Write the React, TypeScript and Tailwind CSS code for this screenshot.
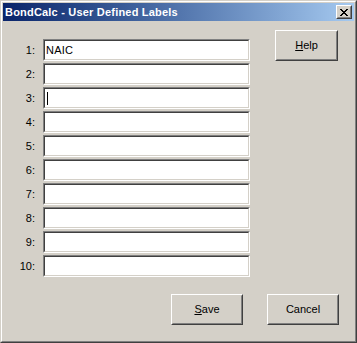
import React from "react";

const labels = ["NAIC", "", "", "", "", "", "", "", "", ""];

function Field({ value, caret }: { value: string; caret?: boolean }) {
  return (
    <div className="h-[22px] w-[207px] border border-t-[#808080] border-l-[#808080] border-b-white border-r-white">
      <div className="h-full w-full border border-t-[#404040] border-l-[#404040] border-b-[#d4d0c8] border-r-[#d4d0c8] bg-white flex items-center pl-[1px]">
        {value && <span className="text-[11px] leading-none text-black tracking-[0.2px]">{value}</span>}
        {caret && <span className="block w-[1px] h-[13px] bg-black ml-[1px]" />}
      </div>
    </div>
  );
}

function Button({ children, w }: { children: React.ReactNode; w: string }) {
  return (
    <div className={`${w} h-[31px] border border-t-white border-l-white border-b-[#404040] border-r-[#404040]`}>
      <div className="h-full w-full border border-t-[#d4d0c8] border-l-[#d4d0c8] border-b-[#808080] border-r-[#808080] flex items-center justify-center text-[11px] text-black">
        {children}
      </div>
    </div>
  );
}

export default function App() {
  return (
    <div
      className="w-[357px] h-[343px] bg-[#d4d0c8] border border-t-[#d4d0c8] border-l-[#d4d0c8] border-b-[#404040] border-r-[#404040] select-none"
      style={{ fontFamily: '"Liberation Sans", Arial, sans-serif' }}
    >
      <div className="h-full w-full border border-t-white border-l-white border-b-[#808080] border-r-[#808080] p-[1px] flex flex-col">
        {/* title bar */}
        <div className="h-[18px] bg-gradient-to-r from-[#0a246a] to-[#a6caf0] flex items-center justify-between pl-[2px] pr-[2px]">
          <span className="text-white font-bold text-[11px] leading-none tracking-[0.2px]">BondCalc - User Defined Labels</span>
          <div className="w-[16px] h-[14px] border border-t-white border-l-white border-b-[#404040] border-r-[#404040] bg-[#d4d0c8]">
            <div className="h-full w-full border border-t-[#d4d0c8] border-l-[#d4d0c8] border-b-[#808080] border-r-[#808080] flex items-center justify-center">
              <svg width="8" height="7" viewBox="0 0 8 7" shapeRendering="crispEdges">
                <path d="M0 0h2v1h-2zM6 0h2v1h-2zM1 1h2v1h-2zM5 1h2v1h-2zM2 2h4v1h-4zM3 3h2v1h-2zM2 4h4v1h-4zM1 5h2v1h-2zM5 5h2v1h-2zM0 6h2v1h-2zM6 6h2v1h-2z" fill="#000" />
              </svg>
            </div>
          </div>
        </div>
        {/* body */}
        <div className="flex">
          <div className="flex flex-col gap-[2px] pt-[18px]">
            {labels.map((v, i) => (
              <div key={i} className="flex items-center">
                <span className="w-[40px] pr-[8px] text-right text-[11px] text-black">{i + 1}:</span>
                <Field value={v} caret={i === 2} />
              </div>
            ))}
          </div>
          <div className="pt-[9px] pl-[25px]">
            <Button w="w-[63px]">
              <span><span className="underline">H</span>elp</span>
            </Button>
          </div>
        </div>
        <div className="flex justify-end gap-[24px] pr-[15px] pt-[17px]">
          <Button w="w-[72px]">
            <span><span className="underline">S</span>ave</span>
          </Button>
          <Button w="w-[72px]">Cancel</Button>
        </div>
      </div>
    </div>
  );
}
